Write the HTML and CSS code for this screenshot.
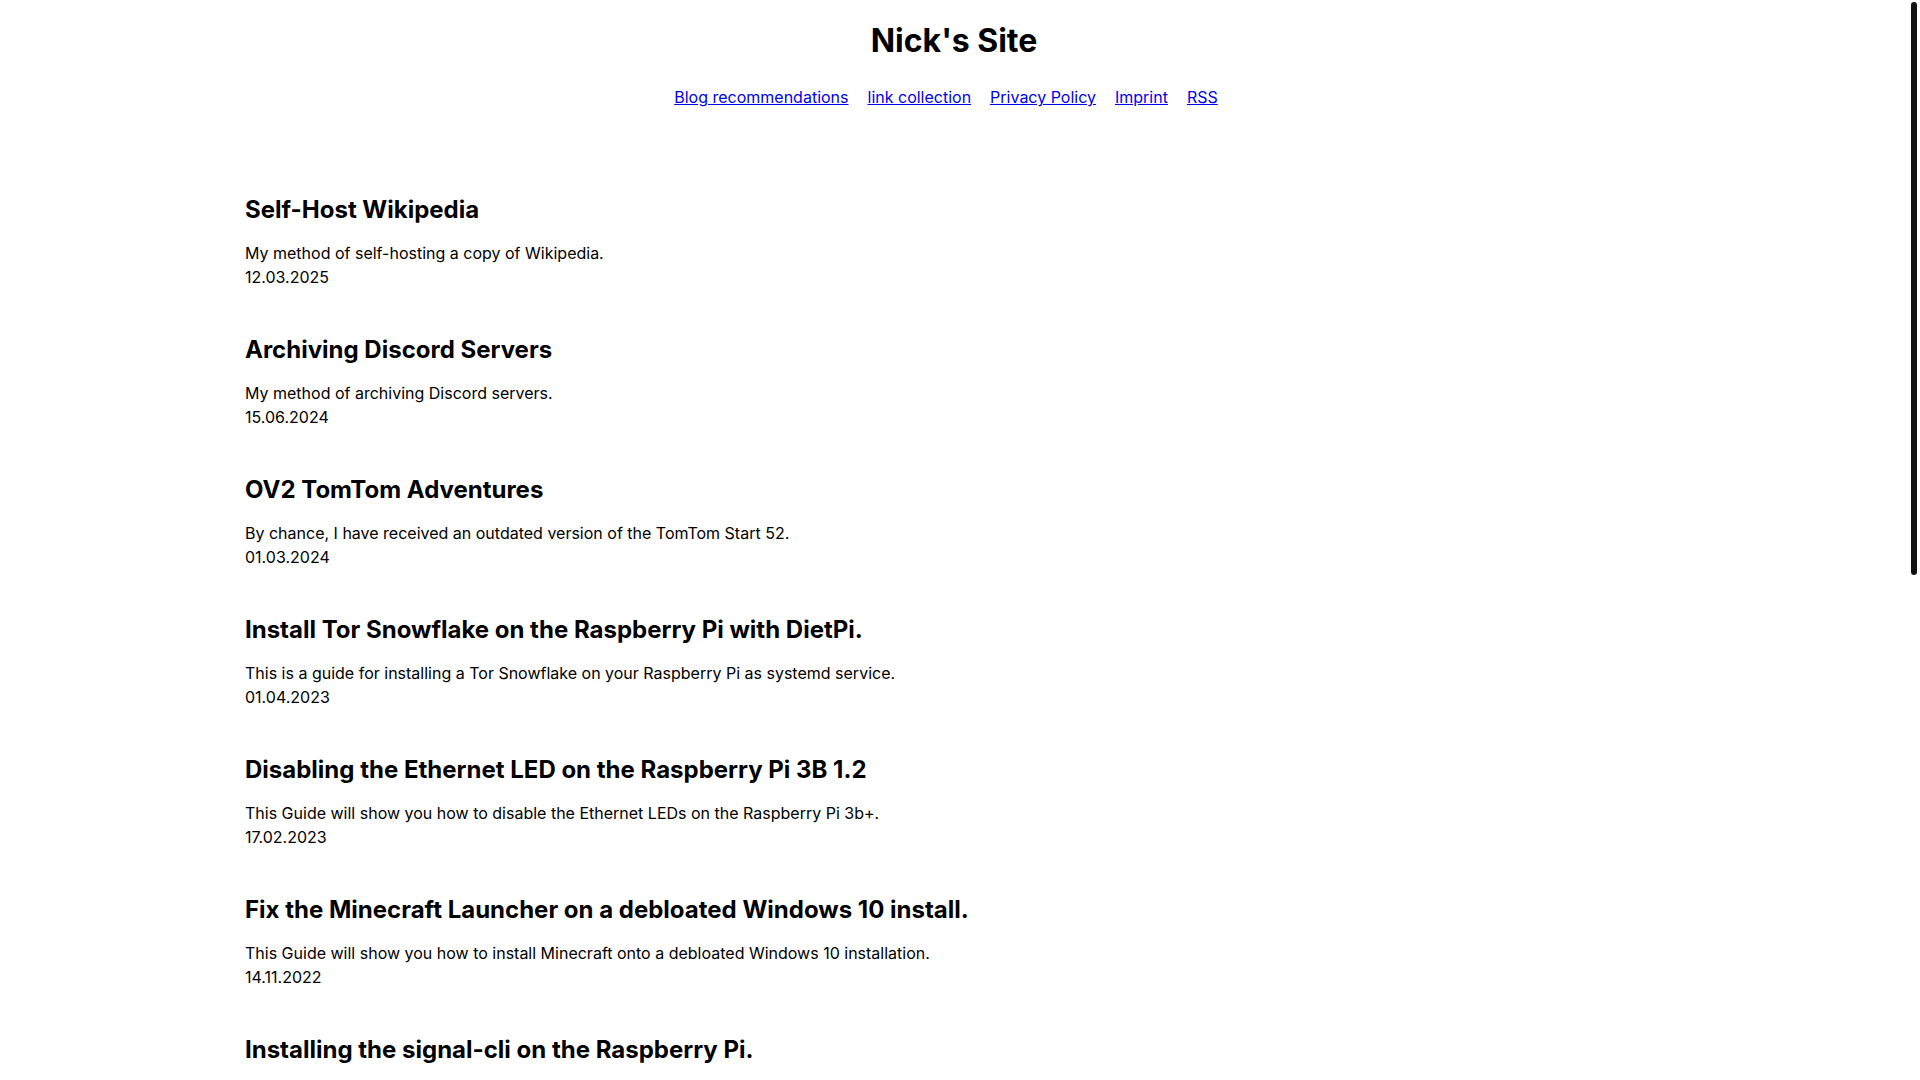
FILE: index.html
```html
<!DOCTYPE html>
<html lang="en">
<head>
<meta charset="utf-8">
<title>Nick's Site</title>
<link rel="stylesheet" href="styles.css">
</head>
<body>
<header class="site-header">
  <h1 class="site-title">Nick's Site</h1>
  <nav class="site-nav">
    <a href="#">Blog recommendations</a>
    <a href="#">link collection</a>
    <a href="#">Privacy Policy</a>
    <a href="#">Imprint</a>
    <a href="#">RSS</a>
  </nav>
</header>
<main class="posts">
  <article class="post">
    <h2 class="post-title">Self-Host Wikipedia</h2>
    <p class="post-desc">My method of self-hosting a copy of Wikipedia.</p>
    <p class="post-date">12.03.2025</p>
  </article>
  <article class="post">
    <h2 class="post-title">Archiving Discord Servers</h2>
    <p class="post-desc">My method of archiving Discord servers.</p>
    <p class="post-date">15.06.2024</p>
  </article>
  <article class="post">
    <h2 class="post-title">OV2 TomTom Adventures</h2>
    <p class="post-desc">By chance, I have received an outdated version of the TomTom Start 52.</p>
    <p class="post-date">01.03.2024</p>
  </article>
  <article class="post">
    <h2 class="post-title">Install Tor Snowflake on the Raspberry Pi with DietPi.</h2>
    <p class="post-desc">This is a guide for installing a Tor Snowflake on your Raspberry Pi as systemd service.</p>
    <p class="post-date">01.04.2023</p>
  </article>
  <article class="post">
    <h2 class="post-title">Disabling the Ethernet LED on the Raspberry Pi 3B 1.2</h2>
    <p class="post-desc">This Guide will show you how to disable the Ethernet LEDs on the Raspberry Pi 3b+.</p>
    <p class="post-date">17.02.2023</p>
  </article>
  <article class="post">
    <h2 class="post-title">Fix the Minecraft Launcher on a debloated Windows 10 install.</h2>
    <p class="post-desc">This Guide will show you how to install Minecraft onto a debloated Windows 10 installation.</p>
    <p class="post-date">14.11.2022</p>
  </article>
  <article class="post">
    <h2 class="post-title">Installing the signal-cli on the Raspberry Pi.</h2>
  </article>
</main>
<div class="scrollbar" aria-hidden="true"><div class="scrollbar-thumb"></div></div>
</body>
</html>
```

FILE: styles.css
```css
html {
  background: #ffffff;
  scrollbar-width: none;
}

html::-webkit-scrollbar {
  display: none;
}

body {
  margin: 0;
  padding-right: 12px;
  min-height: 2028px;
  font-family: Inter, "Noto Sans", sans-serif;
  font-size: 16px;
  line-height: 24px;
  color: #000000;
}

.site-header {
  display: flex;
  flex-direction: column;
  align-items: center;
  padding-top: 17px;
}

.site-title {
  margin: 0;
  font-size: 32px;
  line-height: 48px;
  font-weight: 700;
}

.site-nav {
  display: flex;
  gap: 19px;
  margin-top: 20px;
  padding-right: 16px;
}

.site-nav a {
  color: #0000ee;
  text-decoration: underline;
}

.posts {
  max-width: 1418px;
  margin: 83px auto 0;
  display: flex;
  flex-direction: column;
  gap: 43px;
}

.post-title {
  margin: 0 0 13px;
  font-size: 24px;
  line-height: 36px;
  font-weight: 700;
}

.post-desc,
.post-date {
  margin: 0;
}

.scrollbar {
  position: fixed;
  top: 0;
  right: 0;
  bottom: 0;
  width: 12px;
  background: #ffffff;
}

.scrollbar-thumb {
  margin: 2px 0 0 3px;
  width: 6px;
  height: 573px;
  border-radius: 3px;
  background: #111111;
}
```
